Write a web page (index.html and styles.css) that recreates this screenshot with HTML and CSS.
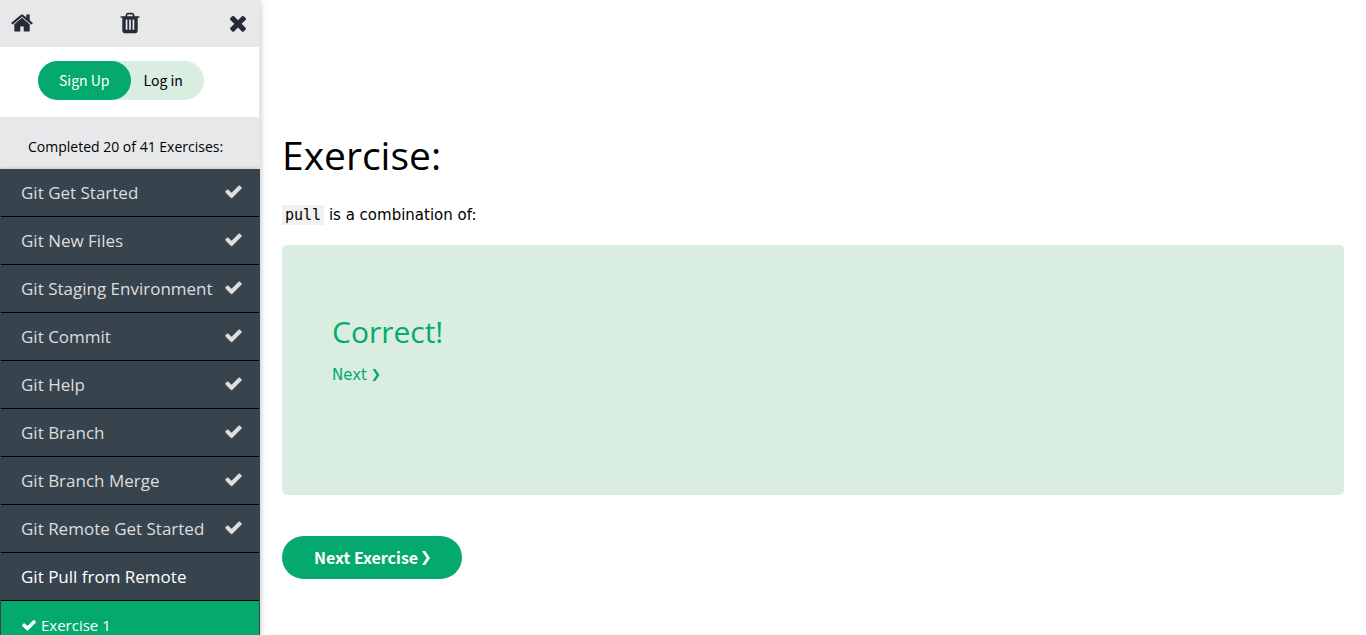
FILE: index.html
```html
<!DOCTYPE html>
<html lang="en">
<head>
<meta charset="utf-8">
<title>Exercise</title>
<link rel="stylesheet" href="styles.css">
</head>
<body>
<svg class="defs" aria-hidden="true">
  <symbol id="check" viewBox="0 0 1792 1792"><path d="M1671 566q0 40-28 68l-724 724-136 136q-28 28-68 28t-68-28l-136-136-362-362q-28-28-28-68t28-68l136-136q28-28 68-28t68 28l294 295 656-657q28-28 68-28t68 28l136 136q28 28 28 68z"/></symbol>
  <symbol id="chevron" viewBox="0 0 8 14"><path d="M0 0H3.200L8 7 3.200 14H0L4.600 7z"/></symbol>
</svg>
<div class="layout">
  <aside class="sidebar">
    <div class="tools">
      <a class="tool" href="#" aria-label="Home"><svg viewBox="0 0 1792 1792"><path d="M1472 992v480q0 26-19 45t-45 19h-384v-384h-256v384h-384q-26 0-45-19t-19-45v-480q0-1 .5-3t.5-3l575-474 575 474q1 2 1 6zm223-69l-62 74q-8 9-21 11h-3q-13 0-21-7l-692-577-692 577q-12 8-24 7-13-2-21-11l-62-74q-8-10-7-23.5t11-21.5l719-599q32-26 76-26t76 26l244 204v-195q0-14 9-23t23-9h192q14 0 23 9t9 23v408l219 182q10 8 11 21.5t-7 23.5z"/></svg></a>
      <button class="tool" aria-label="Reset"><svg viewBox="0 0 1792 1792"><path d="M704 1376v-704q0-14-9-23t-23-9h-64q-14 0-23 9t-9 23v704q0 14 9 23t23 9h64q14 0 23-9t9-23zm256 0v-704q0-14-9-23t-23-9h-64q-14 0-23 9t-9 23v704q0 14 9 23t23 9h64q14 0 23-9t9-23zm256 0v-704q0-14-9-23t-23-9h-64q-14 0-23 9t-9 23v704q0 14 9 23t23 9h64q14 0 23-9t9-23zm-544-992h448l-48-117q-7-9-17-11h-317q-10 2-17 11zm928 32v64q0 14-9 23t-23 9h-96v948q0 83-47 143.500t-113 60.500h-832q-66 0-113-58.500t-47-141.500v-952h-96q-14 0-23-9t-9-23v-64q0-14 9-23t23-9h309l70-167q15-37 54-63t79-26h320q40 0 79 26t54 63l70 167h309q14 0 23 9t9 23z"/></svg></button>
      <button class="tool" aria-label="Close"><svg viewBox="0 0 1792 1792"><path d="M1490 1322q0 40-28 68l-136 136q-28 28-68 28t-68-28l-294-294-294 294q-28 28-68 28t-68-28l-136-136q-28-28-28-68t28-68l294-294-294-294q-28-28-28-68t28-68l136-136q28-28 68-28t68 28l294 294 294-294q28-28 68-28t68 28l136 136q28 28 28 68t-28 68l-294 294 294 294q28 28 28 68z"/></svg></button>
    </div>
    <div class="account">
      <div class="pill">
        <a class="signup" href="#">Sign Up</a>
        <a class="login" href="#">Log in</a>
      </div>
    </div>
    <p class="progress">Completed 20 of 41 Exercises:</p>
    <nav class="menu">
      <a class="item" href="#">Git Get Started<svg><use href="#check"/></svg></a>
      <a class="item" href="#">Git New Files<svg><use href="#check"/></svg></a>
      <a class="item" href="#">Git Staging Environment<svg><use href="#check"/></svg></a>
      <a class="item" href="#">Git Commit<svg><use href="#check"/></svg></a>
      <a class="item" href="#">Git Help<svg><use href="#check"/></svg></a>
      <a class="item" href="#">Git Branch<svg><use href="#check"/></svg></a>
      <a class="item" href="#">Git Branch Merge<svg><use href="#check"/></svg></a>
      <a class="item" href="#">Git Remote Get Started<svg><use href="#check"/></svg></a>
      <a class="item open" href="#">Git Pull from Remote</a>
      <a class="sub" href="#"><svg><use href="#check"/></svg>Exercise 1</a>
    </nav>
  </aside>
  <main class="content">
    <h1>Exercise:</h1>
    <p class="question"><code>pull</code> is a combination of:</p>
    <section class="result">
      <h2>Correct!</h2>
      <a class="forward" href="#">Next <svg><use href="#chevron"/></svg></a>
    </section>
    <button class="forward next">Next Exercise <svg><use href="#chevron"/></svg></button>
  </main>
</div>
</body>
</html>
```
FILE: styles.css
```css
* { box-sizing: border-box; }
body {
  margin: 0;
  background: #fff;
  color: #000;
  font-family: "DejaVu Sans", sans-serif;
  font-size: 15px;
  line-height: 24px;
}
a { color: inherit; text-decoration: none; }
button { border: 0; padding: 0; background: none; color: inherit; cursor: pointer; }
.defs { display: none; }
.layout { display: flex; height: 100vh; }
.sidebar {
  flex: none;
  width: 260px;
  overflow: hidden;
  background: #e7e8ea;
  box-shadow: 0 2px 5px rgba(0,0,0,.16), 0 2px 10px rgba(0,0,0,.12);
  font-family: "Open Sans", sans-serif;
}
.tools {
  display: flex;
  justify-content: space-between;
  align-items: center;
  height: 47px;
  padding: 0 10px 2px;
}
.tool, .tool svg { display: block; width: 24px; height: 24px; }
.tool svg { fill: #282a35; }
.account {
  margin-right: 1px;
  padding: 14px 38px 17px;
  background: #fff;
}
.pill {
  display: inline-flex;
  vertical-align: top;
  border-radius: 20px;
  background: #d9eee1;
  font-family: "Noto Sans CJK SC", sans-serif;
  font-size: 14px;
  line-height: 39px;
}
.signup { padding: 0 21px; border-radius: 20px; background: #04aa6d; color: #fff; }
.login { padding: 0 21px 0 13px; }
.progress {
  margin: 0;
  padding: 18px 28px 10px;
  font-size: 14px;
  white-space: nowrap;
}
.menu {
  min-height: 100%;
  padding: 0 1px;
  background: #38444d;
  box-shadow: 0 0 4px rgba(0,0,0,.2);
}
.item {
  display: flex;
  justify-content: space-between;
  align-items: center;
  height: 48px;
  padding: 0 16px 0 20px;
  border-bottom: 1px solid #000;
  color: #ddd;
  font-size: 17px;
  white-space: nowrap;
}
.item svg { width: 19px; height: 19px; margin-bottom: 2px; fill: #ddd; }
.open { color: #fff; }
.sub {
  display: flex;
  align-items: center;
  gap: 4px;
  height: 47px;
  padding: 0 20px;
  background: #04aa6d;
  color: #fff;
}
.sub svg { width: 16px; height: 16px; fill: #fff; }
.content { flex: 1; padding: 123px 22px 0; }
h1, h2 { margin: 0; font-family: "Open Sans", sans-serif; font-weight: 400; }
h1 { font-size: 39px; line-height: 64px; }
.question { margin: 16px 0 18px; }
code {
  padding: 1px 3px;
  background: #f1f1f1;
  font-family: "DejaVu Sans Mono", monospace;
  font-size: 15px;
}
.result {
  min-height: 250px;
  padding: 63px 50px;
  border-radius: 5px;
  background: #d9eee1;
  color: #04aa6d;
}
h2 { margin-bottom: 7px; font-size: 30px; line-height: 48px; }
.forward { display: inline-flex; align-items: center; gap: 5px; }
.forward svg { width: 8px; height: 12px; fill: currentColor; }
.next {
  gap: 4px;
  margin-top: 41px;
  padding: 0 32px;
  border-radius: 22px;
  background: #04aa6d;
  color: #fff;
  font-family: "Noto Sans CJK SC", sans-serif;
  font-size: 16px;
  font-weight: 700;
  line-height: 43px;
}
.next svg { height: 14px; }
```
